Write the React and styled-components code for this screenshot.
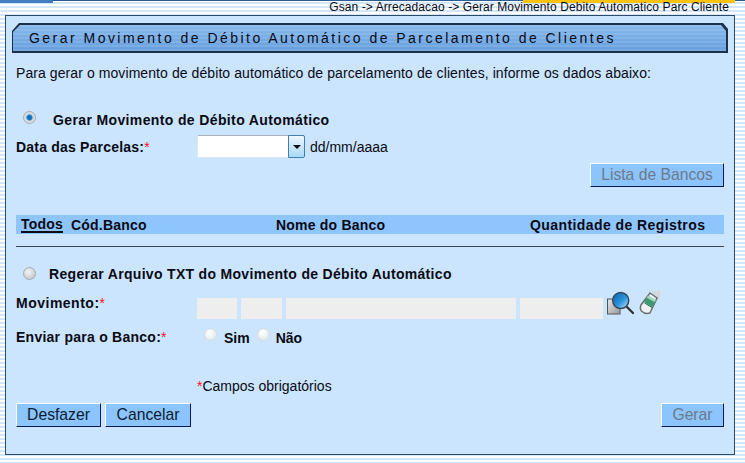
import React from "react";
import styled, { createGlobalStyle } from "styled-components";

const GlobalStyle = createGlobalStyle`
  html, body {
    margin: 0;
    padding: 0;
    height: 100%;
    overflow: hidden;
  }
  body {
    font-family: "Liberation Sans", Arial, sans-serif;
    color: #0a0a14;
    background: repeating-linear-gradient(
      to bottom,
      #ffffff 0px,
      #ffffff 2px,
      #d2e7fb 2px,
      #d2e7fb 4px
    );
  }
`;

const Page = styled.div`
  width: 745px;
  height: 463px;
  overflow: hidden;
`;

const TopBar = styled.div`
  position: relative;
  height: 15px;
  padding-right: 16px;
  text-align: right;
`;

const TopTab = styled.div`
  position: absolute;
  top: 0;
  left: 0;
  width: 745px;
  height: 1px;
  background: #2b5f99;

  &::before {
    content: "";
    position: absolute;
    left: 0;
    top: 0;
    width: 53px;
    height: 3px;
    background: #3f7cc0;
  }
  &::after {
    content: "";
    position: absolute;
    left: 523px;
    top: 0;
    width: 212px;
    height: 3px;
    background: #ffc20e;
  }
`;

const Crumbs = styled.div`
  position: relative;
  padding-top: 1px;
  font-size: 12px;
  line-height: 12px;
  letter-spacing: 0.09px;
  white-space: nowrap;
`;

const Panel = styled.div`
  margin-left: 5px;
  width: 716px;
  height: 431px;
  border: 1px solid #2d4a68;
  background: #cbe5fe;
  padding: 7px 6px 0 6px;
`;

const TitleBar = styled.div`
  box-sizing: border-box;
  width: 716px;
  height: 30px;
  padding: 2px 2px 2px 1px;
  background: #1d3049;
  clip-path: polygon(7px 0, calc(100% - 5px) 0, 100% 6px, 100% 100%, 0 100%, 0 8px);
`;

const TitleInner = styled.div`
  height: 100%;
  padding-left: 16px;
  font-size: 14px;
  line-height: 26px;
  letter-spacing: 2.47px;
  white-space: nowrap;
  clip-path: polygon(7px 0, calc(100% - 5px) 0, 100% 6px, 100% 100%, 0 100%, 0 7px);
  background:
    repeating-linear-gradient(
      to bottom,
      rgba(255, 255, 255, 0.1) 0px,
      rgba(255, 255, 255, 0.1) 2px,
      rgba(0, 0, 0, 0) 2px,
      rgba(0, 0, 0, 0) 4px
    ),
    linear-gradient(to bottom, #86b8ed, #669fdd);
`;

const Body = styled.div`
  padding: 0 4px;
`;

const Intro = styled.div`
  height: 44px;
  padding-top: 12px;
  font-size: 14px;
  line-height: 16px;
  letter-spacing: 0.08px;
`;

const Row = styled.div`
  display: flex;
  align-items: center;
  height: ${(p) => p.$h}px;
  margin-top: ${(p) => p.$mt || 0}px;
`;

const Radio = styled.span`
  flex: none;
  display: inline-block;
  box-sizing: border-box;
  width: 13px;
  height: 13px;
  border-radius: 50%;
  border: 1px solid ${(p) => (p.$faint ? "#d4dbe2" : "#a4aab0")};
  margin: ${(p) => p.$m};
  background: ${(p) =>
    p.$checked
      ? "radial-gradient(circle at 50% 50%, #0f5fa8 0, #1b7fcc 2.5px, #cdd3d8 3.5px, #eef0f2 100%)"
      : p.$faint
      ? "radial-gradient(circle at 40% 35%, #ffffff 0, #eef1f3 50%, #d8dde1 100%)"
      : "radial-gradient(circle at 40% 35%, #f2f3f4 0, #d4d6d8 55%, #b6babd 100%)"};
`;

const BoldText = styled.span`
  font-size: 14px;
  font-weight: bold;
  letter-spacing: ${(p) => p.$ls || "0.2px"};
  white-space: nowrap;
  position: relative;
  top: ${(p) => p.$top || 0}px;
`;

const Label = styled(BoldText)`
  flex: none;
  width: ${(p) => p.$w}px;
`;

const Star = styled.span`
  color: #ff1020;
  font-weight: normal;
`;

const DateInput = styled.div`
  display: flex;
  box-sizing: border-box;
  width: 108px;
  height: 23px;
  background: #ffffff;
  border: 1px solid #dfe8f0;
  border-top-color: #a9b0b8;
  border-radius: 2px;
  justify-content: flex-end;
`;

const SelectArrow = styled.div`
  display: flex;
  align-items: center;
  justify-content: center;
  box-sizing: border-box;
  width: 17px;
  height: 23px;
  margin: -1px -1px -1px 0;
  border: 1px solid #3f7fb5;
  border-radius: 0 2px 2px 0;
  background: linear-gradient(to bottom, #eef7fd, #a9d9f6);

  &::after {
    content: "";
    border-left: 4px solid transparent;
    border-right: 4px solid transparent;
    border-top: 4px solid #111;
  }
`;

const Hint = styled.span`
  font-size: 14px;
  margin-left: 5px;
  white-space: nowrap;
`;

const Right = styled.div`
  display: flex;
  justify-content: flex-end;
  margin-top: ${(p) => p.$mt}px;
`;

const Button = styled.div`
  box-sizing: border-box;
  display: flex;
  align-items: center;
  justify-content: center;
  height: 24px;
  width: ${(p) => p.$w}px;
  font-size: 15.7px;
  color: ${(p) => (p.$off ? "#6d7a88" : "#0a1a30")};
  background: #8cc4fd;
  border: 1px solid;
  border-color: #ffffff #0c1a5c #0c1a5c #ffffff;
`;

const TableHead = styled.div`
  display: grid;
  grid-template-columns: 55px 205px 254px 1fr;
  align-items: center;
  height: 19px;
  margin-top: 28px;
  background: #8fc5fd;
  font-size: 14px;
  font-weight: bold;
  letter-spacing: 0.2px;
  white-space: nowrap;
`;

const Todos = styled.span`
  margin-left: 5px;
  justify-self: start;
  border-bottom: 2px solid #0a0a14;
  line-height: 13px;
  position: relative;
  top: 1px;
`;

const HeadWide = styled.span`
  letter-spacing: 0.42px;
`;

const Divider = styled.div`
  height: 1px;
  margin-top: 12px;
  background: #3d4650;
`;

const ReadOnly = styled.div`
  flex: none;
  height: 21px;
  width: ${(p) => p.$w}px;
  margin-right: 4px;
  background: #eeeeee;
`;

const IconSlot = styled.span`
  display: inline-flex;
  position: relative;
  top: -6px;
  margin-left: ${(p) => p.$ml || 0}px;
`;

const Mandatory = styled.div`
  margin: 30px 0 0 181px;
  height: 16px;
  font-size: 14px;
  line-height: 16px;
`;

const Actions = styled.div`
  display: flex;
  margin-top: 9px;
  gap: 4px;
`;

const Spacer = styled.div`
  flex: 1;
`;

const LensIcon = () => (
  <svg width="27" height="25" viewBox="0 0 27 25">
    <defs>
      <linearGradient id="docFill" x1="0" y1="0" x2="1" y2="1">
        <stop offset="0" stopColor="#e6e6e6" />
        <stop offset="1" stopColor="#9a9a9a" />
      </linearGradient>
      <linearGradient id="lensFill" x1="0" y1="0" x2="1" y2="1">
        <stop offset="0" stopColor="#0a5fa8" />
        <stop offset="0.55" stopColor="#2a95dc" />
        <stop offset="1" stopColor="#cfeaf9" />
      </linearGradient>
    </defs>
    <rect x="0.5" y="9" width="12.5" height="15" fill="url(#docFill)" stroke="#555" />
    <line x1="20" y1="17" x2="26" y2="23" stroke="#2c2c2c" strokeWidth="2.2" strokeLinecap="round" />
    <circle cx="13.7" cy="10.5" r="8" fill="url(#lensFill)" stroke="#34495c" strokeWidth="1.5" />
  </svg>
);

const EraserIcon = () => (
  <svg width="23" height="25" viewBox="0 0 23 25">
    <path d="M13 1 L21 0.5 L22 5 L18 11 Z" fill="#d5d8da" />
    <path d="M11 3 L18 8 L11 23 Q6 24.5 2.5 21 Q0.5 18.5 2 15 Z" fill="#eef1f0" stroke="#6a6f70" strokeWidth="1.5" />
    <path d="M9 6 L17 11 L13 17 L5 12 Z" fill="#3f9a72" />
    <path d="M9.5 5.5 L17 10 L15.5 12 L7.5 7.5 Z" fill="#a5d8bd" />
    <path d="M5.5 13 L13 17.5" stroke="#1f6e4d" strokeWidth="1" />
  </svg>
);

const App = () => (
  <Page>
    <GlobalStyle />
    <TopBar>
      <TopTab />
      <Crumbs>Gsan -&gt; Arrecadacao -&gt; Gerar Movimento Debito Automatico Parc Cliente</Crumbs>
    </TopBar>
    <Panel>
      <TitleBar>
        <TitleInner>Gerar Movimento de Débito Automático de Parcelamento de Clientes</TitleInner>
      </TitleBar>
      <Body>
        <Intro>
          Para gerar o movimento de débito automático de parcelamento de clientes, informe os dados abaixo:
        </Intro>
        <Row $h={22}>
          <Radio $checked $m="-6px 17px 0 7px" />
          <BoldText $ls="0.37px">Gerar Movimento de Débito Automático</BoldText>
        </Row>
        <Row $h={23} $mt={4}>
          <Label $w={181}>
            Data das Parcelas:<Star>*</Star>
          </Label>
          <DateInput>
            <SelectArrow />
          </DateInput>
          <Hint>dd/mm/aaaa</Hint>
        </Row>
        <Right $mt={5}>
          <Button $w={134} $off>
            Lista de Bancos
          </Button>
        </Right>
        <TableHead>
          <Todos>Todos</Todos>
          <span>Cód.Banco</span>
          <span>Nome do Banco</span>
          <HeadWide>Quantidade de Registros</HeadWide>
        </TableHead>
        <Divider />
        <Row $h={22} $mt={16}>
          <Radio $m="-2px 13px 0 7px" />
          <BoldText $ls="0.31px">Regerar Arquivo TXT do Movimento de Débito Automático</BoldText>
        </Row>
        <Row $h={21} $mt={13}>
          <Label $w={181} $top={-6} $ls="0.5px">
            Movimento:<Star>*</Star>
          </Label>
          <ReadOnly $w={40} />
          <ReadOnly $w={41} />
          <ReadOnly $w={230} />
          <ReadOnly $w={83} />
          <IconSlot>
            <LensIcon />
          </IconSlot>
          <IconSlot $ml={5}>
            <EraserIcon />
          </IconSlot>
        </Row>
        <Row $h={22} $mt={7}>
          <Label $w={188} $ls="0.25px">
            Enviar para o Banco:<Star>*</Star>
          </Label>
          <Radio $faint $m="-6px 7px 0 0" />
          <BoldText $top={1} $ls="0px">Sim</BoldText>
          <Radio $faint $m="-6px 6px 0 7px" />
          <BoldText $top={1} $ls="0px">Não</BoldText>
        </Row>
        <Mandatory>
          <Star>*</Star>Campos obrigatórios
        </Mandatory>
        <Actions>
          <Button $w={85}>Desfazer</Button>
          <Button $w={86}>Cancelar</Button>
          <Spacer />
          <Button $w={63} $off>
            Gerar
          </Button>
        </Actions>
      </Body>
    </Panel>
  </Page>
);

export default App;
